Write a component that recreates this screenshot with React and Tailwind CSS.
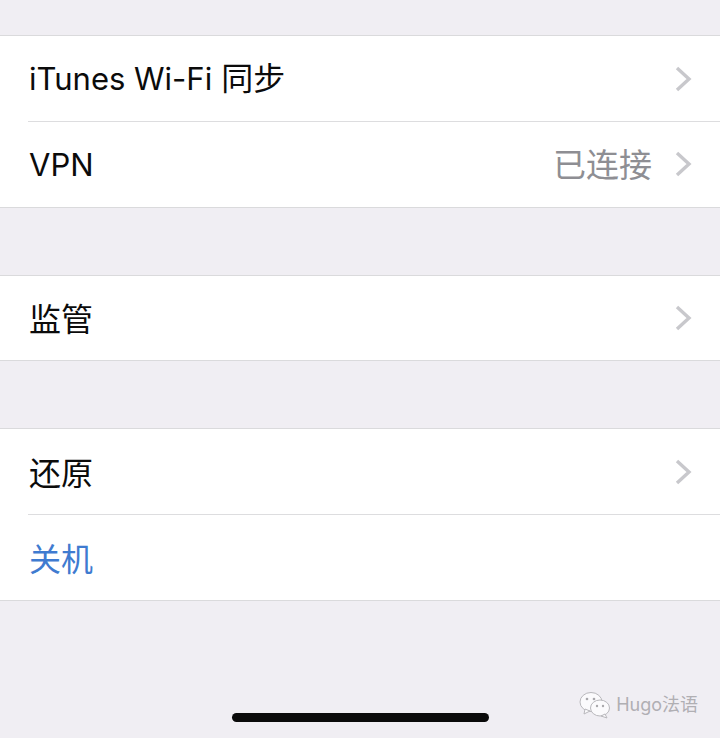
const FONT = "font-['Inter','Noto_Sans_CJK_SC',sans-serif]";

function Chevron() {
  return (
    <svg width="18" height="26" viewBox="0 0 18 26" fill="none" className="block shrink-0">
      <path d="M3 2l12 11L3 24" stroke="#c8c8cc" strokeWidth="3.4" />
    </svg>
  );
}

function Row({ label, value, blue, chevron = true, last, height = "h-[85.5px]", offset = "pt-[4px]" }) {
  return (
    <div className={`relative flex items-center pl-[29px] pr-[28px] ${height}`}>
      <span className={`text-[32px] leading-none ${offset} ${blue ? "text-[#3f7bd0]" : "text-[#0b0b0b]"}`}>{label}</span>
      {value && <span className="ml-auto mr-[22px] pt-[2px] text-[33px] leading-none text-[#8e8e93]">{value}</span>}
      {chevron && <span className={value ? "" : "ml-auto"}><Chevron /></span>}
      {!last && <div className="absolute bottom-0 left-[28px] right-0 h-px bg-[#dddddf]" />}
    </div>
  );
}

function Group({ children }) {
  return <div className="border-y border-[#dadadc] bg-white">{children}</div>;
}

function WeChatMark() {
  return (
    <svg width="32" height="28" viewBox="0 0 32 28" className="shrink-0">
      <ellipse cx="12" cy="11" rx="11" ry="9.5" fill="#fbfafc" stroke="#b9b8bc" strokeWidth="1" />
      <path d="M6 18l-1 5 6-3z" fill="#fbfafc" stroke="#b9b8bc" strokeWidth="1" />
      <ellipse cx="21" cy="17" rx="9.5" ry="8" fill="#fbfafc" stroke="#b9b8bc" strokeWidth="1" />
      <path d="M26 23l2 4-6-2z" fill="#fbfafc" stroke="#b9b8bc" strokeWidth="1" />
      <circle cx="8" cy="8" r="1.3" fill="#a9a8ac" />
      <circle cx="15" cy="8" r="1.3" fill="#a9a8ac" />
      <circle cx="18" cy="15" r="1.2" fill="#a9a8ac" />
      <circle cx="24" cy="15" r="1.2" fill="#a9a8ac" />
    </svg>
  );
}

export default function App() {
  return (
    <div className={`relative h-[738px] w-[720px] overflow-hidden bg-[#f0eef3] pt-[35px] ${FONT}`}>
      <Group>
        <Row offset="pt-[1px]" label={<><span className="text-[31px]">iTunes Wi-Fi</span> 同步</>} />
        <Row offset="pt-[2px]" label={<span className="text-[31px]">VPN</span>} value="已连接" last />
      </Group>
      <div className="h-[67px]" />
      <Group>
        <Row label="监管" last height="h-[84px]" />
      </Group>
      <div className="h-[67px]" />
      <Group>
        <Row label="还原" />
        <Row label="关机" blue chevron={false} last offset="pt-[5px]" />
      </Group>

      {/* watermark + home bar */}
      <div className="absolute bottom-[19px] right-[22px] flex items-center gap-[5px] text-[18px] leading-none text-[#b0afb3]">
        <WeChatMark />
        <span>Hugo法语</span>
      </div>
      <div className="absolute bottom-[16px] left-[232px] h-[9px] w-[257px] rounded-full bg-[#0a0a0a]" />
    </div>
  );
}
